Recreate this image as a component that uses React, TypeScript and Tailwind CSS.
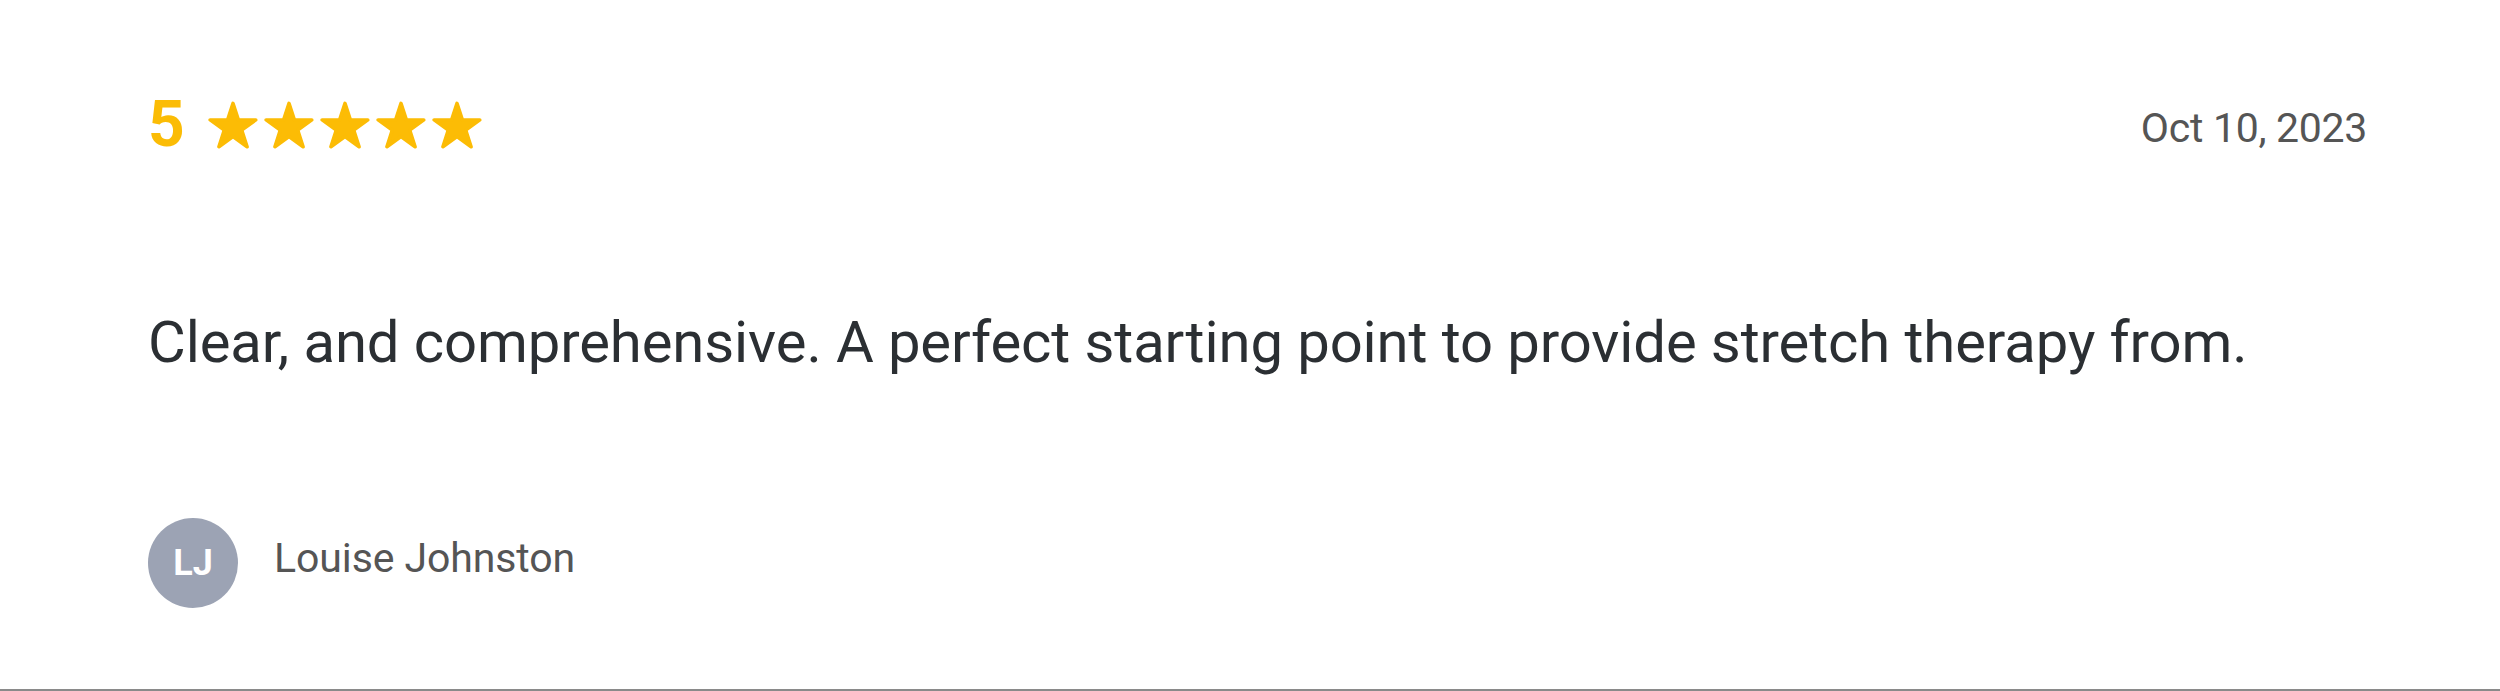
const Star = () => (
  <svg width="50" height="50" viewBox="0 0 50 50" className="shrink-0">
    <polygon
      points="25,3.3 30.39,19.88 47.83,19.88 33.72,30.13 39.11,46.72 25,36.47 10.89,46.72 16.28,30.13 2.17,19.88 19.61,19.88"
      fill="#fcbc05"
      stroke="#fcbc05"
      strokeWidth="3.5"
      strokeLinejoin="round"
    />
  </svg>
);

export default function App() {
  return (
    <div className="w-[2500px] h-[691px] bg-white border-b-2 border-[#8a8a8a] font-['Roboto',sans-serif] flex flex-col pl-[148px] pr-[133px] pt-[93px]">
      {/* Rating + date */}
      <div className="flex items-center justify-between h-[64px]">
        <div className="flex items-center">
          <span className="text-[64px] leading-[64px] font-bold text-[#fbbc05]">5</span>
          <div className="flex items-center gap-[6px] ml-[23px]">
            {[0, 1, 2, 3, 4].map((i) => (
              <Star key={i} />
            ))}
          </div>
        </div>
        <span className="text-[41px] leading-[42px] tracking-[-0.3px] text-[#555555] mt-[6px]">Oct 10, 2023</span>
      </div>

      {/* Review body */}
      <p className="mt-[150px] text-[58px] leading-[70px] tracking-[-0.1px] text-[#2b2f33]">
        Clear, and comprehensive. A perfect starting point to provide stretch therapy from.
      </p>

      {/* Author */}
      <div className="mt-[141px] flex items-center">
        <div className="w-[90px] h-[90px] rounded-full bg-[#9ca3b4] flex items-center justify-center">
          <span className="text-[36px] leading-none font-bold text-white">LJ</span>
        </div>
        <span className="ml-[36px] mb-[10px] text-[41px] leading-[42px] tracking-[-0.1px] text-[#555555]">Louise Johnston</span>
      </div>
    </div>
  );
}
